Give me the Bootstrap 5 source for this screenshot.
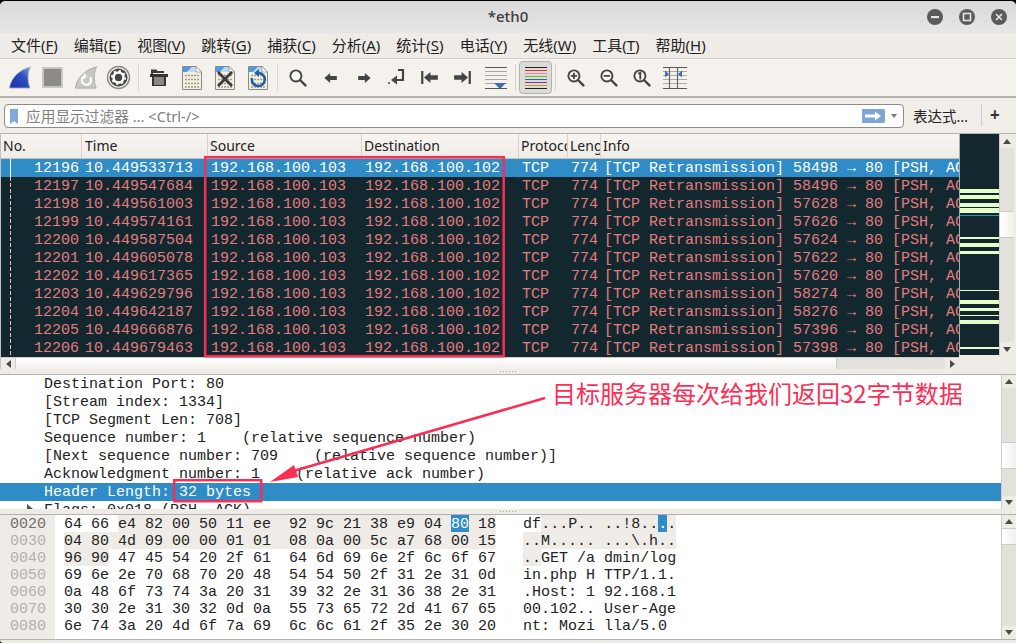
<!DOCTYPE html>
<html lang="zh">
<head>
<meta charset="utf-8">
<title>*eth0</title>
<link href="https://cdn.jsdelivr.net/npm/bootstrap@5.3.0/dist/css/bootstrap.min.css" rel="stylesheet">
<style>
html,body{height:643px;overflow:hidden;background:#000;margin:0}
body{font-family:"Noto Sans","Noto Sans CJK SC",sans-serif;color:#222}
.win{position:relative;width:1016px;height:643px;background:#efece8;border-radius:6px 6px 0 3px;overflow:hidden;border-top:1px solid #000}
.titlebar{height:32px;background:linear-gradient(#d9d9d9,#e6e6e6);position:relative}
.ttl{font-size:15px;font-weight:500;color:#3d3d3d;line-height:31px;font-family:"Noto Sans",sans-serif}
.wbtns{position:absolute;right:9px;top:8px;gap:16px}
.wb{width:16px;height:16px;border-radius:50%;background:#5b5b5b;display:block}
.menubar{height:26px;background:#efece8;border-bottom:1px solid #d3d0cb}
.menubar ul{margin-left:3px}
.menubar .nav-link{font-size:15px;line-height:25px;padding:0 8.5px;color:#222;white-space:nowrap}
.menubar u{text-underline-offset:2px}
.toolbar{height:39px;background:#f5f2ed;border-bottom:2px solid #b4b2ae;padding-left:3px}
.tb{width:33px;height:33px;padding:0;border:1px solid transparent;border-radius:4px;display:flex;align-items:center;justify-content:center}
.tb.on{background:#dddbd7;border-color:#b4b2ae}
.tsep{width:1px;height:27px;background:#d8d5d0;margin:0 3px}
.filterbar{height:35px;padding:6px 0 0 4px;background:#f1eeea}
.fbox{width:900px;height:24px;background:#fff;border:1px solid #8e8c88;border-radius:4px;flex:none}
.fmark{width:18px;border-right:1px solid #8e8c88;flex:none}
.fbox .form-control{border:0;padding:0 0 0 4px;height:22px;min-height:0;font-size:14.7px;line-height:22px;border-radius:0;box-shadow:none}
.fbox .form-control::placeholder{color:#7f7f7f;opacity:1}
.expr{font-size:14.5px;margin-left:9px;width:68px;color:#222;line-height:24px}
.vs{width:1px;height:22px;background:#cfccc7}
.plus{font-size:17px;font-weight:700;line-height:22px;color:#333;margin-left:8px}
.plist{height:236px;border-top:1px solid #b4b2ae;border-left:1px solid #c4c2be;background:#efece8}
.pmain{width:1000px;height:223px}
.pgrid{display:grid;grid-template-columns:81px 126px 154px 157px 49px 33px 358px;width:958px}
.phead{height:25px;background:linear-gradient(#f8f5f1,#efece8);border-bottom:1px solid #c4c2be}
.phead>div{font-size:14px;line-height:24px;padding-left:2px;border-right:1px solid #d6d3ce;overflow:hidden;white-space:nowrap;color:#222}
.mono{font-family:"Liberation Mono",monospace;font-size:15px}
.prow{height:18px;background:#12272e;color:#e27d7f}
.prow>div{line-height:20px;height:18px;padding-left:3px;overflow:hidden;white-space:nowrap}
.prow>div.rgt{text-align:right;padding:0 3px 0 0;background:linear-gradient(#fff,#fff) 9px 0/1px 100% no-repeat}
.prow.dash>div.rgt{background:repeating-linear-gradient(#e9b9b9 0 4px,transparent 4px 6px) 9px 0/1px 100% no-repeat}
.prow.sel{background:#308cc6;color:#fff}
.mini{width:40px;height:221px;background:#12272e;display:block;border-left:1px solid #9fb0b3;flex:none}
.vbar{width:15px;background:#e3e1dc;flex:none;border-left:1px solid #d0cdc8}
.sbtn{background:#efece8;height:13px;flex:none;display:flex;align-items:center;justify-content:center}
.thumb{background:linear-gradient(90deg,#fff,#f2f0ec);flex:none;border-top:1px solid #cfccc7;border-bottom:1px solid #cfccc7}
.tup,.tdn,.tlf,.trt{width:0;height:0;border-style:solid;display:block}
.tup{border-width:0 4.5px 5px;border-color:transparent transparent #4b4b4b}
.tdn{border-width:5px 4.5px 0;border-color:#4b4b4b transparent transparent}
.tlf{border-width:4.5px 5px 4.5px 0;border-color:transparent #4b4b4b transparent transparent}
.trt{border-width:4.5px 0 4.5px 5px;border-color:transparent transparent transparent #4b4b4b}
.hbar{height:13px;width:958px;background:#e3e1dc;border-top:1px solid #d0cdc8}
.hbtn{width:14px;flex:none;background:#efece8;display:flex;align-items:center;justify-content:center}
.hthumb{width:822px;flex:none;background:linear-gradient(#fff,#f2f0ec);border:1px solid #cfccc7;border-width:0 1px}
.split{height:5px;flex:none;position:relative}
.grip{display:block;width:16px;height:1px;margin:2px auto 0;background:repeating-linear-gradient(90deg,#a8a6a2 0 1px,transparent 1px 3px)}
.dpane{height:135px;border-top:1px solid #b4b2ae;background:#fff;flex:none;width:1016px}
.dbody{width:1001px;overflow:hidden;height:134px}
.drow{height:18px;line-height:20px;padding-left:44px;white-space:pre;color:#222}
.drow.sel{background:#308cc6;color:#fff}
.caret-r{position:absolute;left:27px;top:3px;width:0;height:0;border-style:solid;border-width:5px 0 5px 6px;border-color:transparent transparent transparent #555}
.drow.rel{position:relative}
.hpane{height:126px;border-top:1px solid #b4b2ae;border-bottom:1px solid #b4b2ae;background:#fff;flex:none}
.hoff{width:55px;background:#efece8;flex:none;padding-left:10px;color:#b2b0ac;flex:none}
.hoff b{font-weight:400;color:#6f6d6a}
.hex{width:946px;padding-left:9px;color:#222;flex:none}
.hx{height:17px;line-height:19px;white-space:pre}
.gr{padding-top:1px;background:linear-gradient(#efece8,#efece8) 0 0/100% 17px no-repeat}
.sb{padding-top:1px;background:linear-gradient(#308cc6,#308cc6) 0 0/100% 17px no-repeat;color:#fff}
.overlay{position:absolute;left:0;top:-1px;width:1016px;height:643px;pointer-events:none}
.note{position:absolute;left:552px;top:376px;font-family:"Noto Sans CJK SC",sans-serif;font-size:24px;line-height:32px;color:#ff2d55;white-space:nowrap}
</style>
</head>
<body>
<svg width="0" height="0" class="d-block" style="position:absolute">
<defs>
<linearGradient id="fin" x1="0" y1="1" x2="1" y2="0"><stop offset="0" stop-color="#1c2fa6"/><stop offset=".6" stop-color="#2a50c0"/><stop offset="1" stop-color="#7da6e6"/></linearGradient>
<symbol id="doc" viewBox="0 0 22 26">
<path d="M1.5 1.5H15L20.5 7V24.5H1.5Z" fill="#f2f0df" stroke="#8b8b85"/>
<path d="M2 2H11L6 7H2Z" fill="#4e9be0"/><path d="M11 2H15V7H7Z" fill="#bcd9f2"/>
<path d="M15 1.5V7H20.5Z" fill="#fff" stroke="#8b8b85" stroke-width=".7"/>
<g fill="none" stroke="#9c9b8e" stroke-width="1.3" stroke-dasharray="2 1"><path d="M4 10.5H18M4 14.5H18M4 18.5H18M4 22H18"/></g>
</symbol>
<symbol id="mag" viewBox="0 0 24 24">
<circle cx="10" cy="10" r="7" fill="#fff" fill-opacity=".4" stroke="#444" stroke-width="2.4"/>
<path d="M15.5 15.5L22 22" stroke="#444" stroke-width="3" stroke-linecap="round"/>
</symbol>
</defs>
</svg>
<div class="win d-flex flex-column">
  <div class="titlebar text-center flex-none">
    <span class="ttl">*eth0</span>
    <div class="wbtns d-flex">
      <svg class="wb" viewBox="0 0 16 16"><rect x="4" y="7" width="8" height="2.2" fill="#e6e6e6"/></svg>
      <svg class="wb" viewBox="0 0 16 16"><rect x="4.5" y="4.5" width="7" height="7" fill="none" stroke="#e6e6e6" stroke-width="1.6"/></svg>
      <svg class="wb" viewBox="0 0 16 16"><path d="M5 5L11 11M11 5L5 11" stroke="#e6e6e6" stroke-width="1.6"/></svg>
    </div>
  </div>
  <nav class="menubar navbar navbar-expand p-0 d-block flex-none">
    <ul class="navbar-nav ps-0">
      <li class="nav-item"><a class="nav-link" href="#">文件(<u>F</u>)</a></li>
      <li class="nav-item"><a class="nav-link" href="#">编辑(<u>E</u>)</a></li>
      <li class="nav-item"><a class="nav-link" href="#">视图(<u>V</u>)</a></li>
      <li class="nav-item"><a class="nav-link" href="#">跳转(<u>G</u>)</a></li>
      <li class="nav-item"><a class="nav-link" href="#">捕获(<u>C</u>)</a></li>
      <li class="nav-item"><a class="nav-link" href="#">分析(<u>A</u>)</a></li>
      <li class="nav-item"><a class="nav-link" href="#">统计(<u>S</u>)</a></li>
      <li class="nav-item"><a class="nav-link" href="#">电话(<u>Y</u>)</a></li>
      <li class="nav-item"><a class="nav-link" href="#">无线(<u>W</u>)</a></li>
      <li class="nav-item"><a class="nav-link" href="#">工具(<u>T</u>)</a></li>
      <li class="nav-item"><a class="nav-link" href="#">帮助(<u>H</u>)</a></li>
    </ul>
  </nav>
  <div class="toolbar d-flex align-items-center flex-none">
    <div class="tb"><svg width="24" height="25" viewBox="0 0 26 26"><path d="M1.5 24.5C3 13 13 4 24.5 1.5C21 8 21 17 24 24.5Z" fill="url(#fin)" stroke="#b9b8c4"/></svg></div>
    <div class="tb"><svg width="21" height="21" viewBox="0 0 22 22"><rect x="1" y="1" width="20" height="20" fill="#8d8b87" stroke="#cbc9c5" stroke-width="2"/></svg></div>
    <div class="tb"><svg width="24" height="25" viewBox="0 0 26 26"><path d="M1.5 24.5C3 13 13 4 24.5 1.5C21 8 21 17 24 24.5Z" fill="#c9c7c3" stroke="#a9a7a3"/><path d="M17.5 13A5 5 0 1 1 11 11.5" fill="none" stroke="#fff" stroke-width="2.4"/><path d="M10 8V16L14 12Z" fill="#fff" transform="rotate(20 12 12)"/></svg></div>
    <div class="tb"><svg width="25" height="25" viewBox="0 0 25 25"><circle cx="12.5" cy="12.5" r="11" fill="#f1efeb" stroke="#8e8c88" stroke-width="1.4"/><circle cx="12.5" cy="12.5" r="9" fill="#444"/><circle cx="12.5" cy="12.5" r="5" fill="none" stroke="#fff" stroke-width="2.6"/><circle cx="12.5" cy="12.5" r="6.6" fill="none" stroke="#fff" stroke-width="1.8" stroke-dasharray="2.2 3"/></svg></div>
    <span class="tsep"></span>
    <div class="tb"><svg width="20" height="20" viewBox="0 0 20 20"><path d="M2 4V1.5H8V3H15V5H4V7H2Z" fill="#3a3a3a"/><path d="M1 6H19V9H17V18H3V9H1Z" fill="#333"/><rect x="5" y="9" width="10" height="8" fill="#8a8885"/></svg></div>
    <div class="tb"><svg width="22" height="26"><use href="#doc"/></svg></div>
    <div class="tb"><svg width="22" height="26" viewBox="0 0 22 26"><use href="#doc" width="22" height="26"/><path d="M4 7L18 21M18 7L4 21" stroke="#3b3b3b" stroke-width="2.8"/></svg></div>
    <div class="tb"><svg width="22" height="26" viewBox="0 0 22 26"><use href="#doc" width="22" height="26"/><path d="M11 8A6.5 6.5 0 1 1 5 13" fill="none" stroke="#1f5fa8" stroke-width="2.6"/><path d="M12 4V12L7 8Z" fill="#1f5fa8"/></svg></div>
    <span class="tsep"></span>
    <div class="tb"><svg width="19" height="19"><use href="#mag" width="19" height="19"/></svg></div>
    <div class="tb"><svg width="14" height="10" viewBox="0 0 16 12"><path d="M0 6L7 0V3.5H15V8.5H7V12Z" fill="#444"/></svg></div>
    <div class="tb"><svg width="14" height="10" viewBox="0 0 16 12"><path d="M16 6L9 0V3.5H1V8.5H9V12Z" fill="#444"/></svg></div>
    <div class="tb"><svg width="18" height="18" viewBox="0 0 18 18"><path d="M10 1H15V11H8" fill="none" stroke="#444" stroke-width="2.2"/><path d="M3 11L9 6.5V15.5Z" fill="#444"/><circle cx="1" cy="14" r="1" fill="#444"/></svg></div>
    <div class="tb"><svg width="17" height="13" viewBox="0 0 18 14"><rect x="0" y="0" width="2.4" height="14" fill="#444"/><path d="M3 7L10 1V4.5H18V9.5H10V13Z" fill="#444"/></svg></div>
    <div class="tb"><svg width="17" height="13" viewBox="0 0 18 14"><rect x="15.6" y="0" width="2.4" height="14" fill="#444"/><path d="M15 7L8 1V4.5H0V9.5H8V13Z" fill="#444"/></svg></div>
    <div class="tb"><svg width="24" height="24" viewBox="0 0 24 24"><g stroke="#a9aaa3" stroke-width="1"><path d="M1 5.5H23M1 9.5H23M1 13.5H23M1 17.5H23"/></g><path d="M1 1.5H23M1 22.5H23" stroke="#555" stroke-width="1.2"/><path d="M10 17H22L16 23Z" fill="#3a6fb5"/></svg></div>
    <span class="tsep"></span>
    <div class="tb on"><svg width="24" height="24" viewBox="0 0 24 24" fill="none" stroke-width="1"><path d="M1 1.5H23" stroke="#222"/><path d="M1 4.5H23" stroke="#e0302e"/><path d="M1 7.5H23" stroke="#e58aa8"/><path d="M1 10.5H23" stroke="#6fc300"/><path d="M1 13.5H23" stroke="#3b5cc4"/><path d="M1 16.5H23" stroke="#7a3a9c"/><path d="M1 19.5H23" stroke="#c19a1c"/><path d="M1 22.5H23" stroke="#222"/></svg></div>
    <span class="tsep"></span>
    <div class="tb"><svg width="19" height="19" viewBox="0 0 24 24"><use href="#mag" width="24" height="24"/><path d="M6 10H14M10 6V14" stroke="#444" stroke-width="2.4"/></svg></div>
    <div class="tb"><svg width="19" height="19" viewBox="0 0 24 24"><use href="#mag" width="24" height="24"/><path d="M6 10H14" stroke="#444" stroke-width="2.4"/></svg></div>
    <div class="tb"><svg width="19" height="19" viewBox="0 0 24 24"><use href="#mag" width="24" height="24"/><path d="M8 7.5L10.5 6V14.5" fill="none" stroke="#444" stroke-width="2.4"/></svg></div>
    <div class="tb"><svg width="24" height="24" viewBox="0 0 24 24"><g stroke="#a9aaa3" stroke-width="1"><path d="M0 5.5H24M0 9.5H24M0 13.5H24M0 17.5H24"/></g><path d="M0 1.5H24M0 22.5H24" stroke="#555" stroke-width="1.2"/><path d="M6.5 1V23M14.5 1V23" stroke="#666" stroke-width="1.2"/><path d="M2 4.5L6 8L2 11.5ZM19 4.5L15 8L19 11.5Z" fill="#3a6fb5"/></svg></div>
  </div>
  <div class="filterbar d-flex flex-none">
    <div class="fbox input-group flex-nowrap align-items-center">
      <div class="fmark d-flex justify-content-center align-items-center h-100"><svg width="8" height="15" viewBox="0 0 8 15"><path d="M0 0H8V15L4 12L0 15Z" fill="#7fa9da"/></svg></div>
      <input class="form-control" type="text" placeholder="应用显示过滤器 ... &lt;Ctrl-/&gt;">
      <svg width="24" height="14" viewBox="0 0 24 14" class="flex-none"><rect width="24" height="14" rx="2" fill="#7ba7d7"/><path d="M4 5.5H14V2.5L20 7L14 11.5V8.5H4Z" fill="#fff"/></svg>
      <span class="d-flex justify-content-center flex-none" style="width:19px"><span class="tdn" style="border-top-color:#777;border-width:4px 3.5px 0"></span></span>
    </div>
    <div class="expr flex-none">表达式…</div>
    <span class="vs flex-none"></span>
    <span class="plus flex-none">+</span>
  </div>
  <div class="plist d-flex flex-column flex-none">
    <div class="d-flex pmain">
      <div class="flex-none" style="width:959px">
        <div class="pgrid phead">
          <div>No.</div><div style="padding-left:3px">Time</div><div>Source</div><div>Destination</div><div>Protocol</div><div>Length</div><div class="border-0">Info</div>
        </div>
        <div class="pgrid prow mono sel"><div class="rgt">12196</div><div>10.449533713</div><div>192.168.100.103</div><div>192.168.100.102</div><div>TCP</div><div>774</div><div>[TCP Retransmission] 58498 → 80 [PSH, ACK] Seq=1 Ack=1</div></div>
        <div class="pgrid prow mono dash"><div class="rgt">12197</div><div>10.449547684</div><div>192.168.100.103</div><div>192.168.100.102</div><div>TCP</div><div>774</div><div>[TCP Retransmission] 58496 → 80 [PSH, ACK] Seq=1 Ack=1</div></div>
        <div class="pgrid prow mono dash"><div class="rgt">12198</div><div>10.449561003</div><div>192.168.100.103</div><div>192.168.100.102</div><div>TCP</div><div>774</div><div>[TCP Retransmission] 57628 → 80 [PSH, ACK] Seq=1 Ack=1</div></div>
        <div class="pgrid prow mono dash"><div class="rgt">12199</div><div>10.449574161</div><div>192.168.100.103</div><div>192.168.100.102</div><div>TCP</div><div>774</div><div>[TCP Retransmission] 57626 → 80 [PSH, ACK] Seq=1 Ack=1</div></div>
        <div class="pgrid prow mono dash"><div class="rgt">12200</div><div>10.449587504</div><div>192.168.100.103</div><div>192.168.100.102</div><div>TCP</div><div>774</div><div>[TCP Retransmission] 57624 → 80 [PSH, ACK] Seq=1 Ack=1</div></div>
        <div class="pgrid prow mono dash"><div class="rgt">12201</div><div>10.449605078</div><div>192.168.100.103</div><div>192.168.100.102</div><div>TCP</div><div>774</div><div>[TCP Retransmission] 57622 → 80 [PSH, ACK] Seq=1 Ack=1</div></div>
        <div class="pgrid prow mono dash"><div class="rgt">12202</div><div>10.449617365</div><div>192.168.100.103</div><div>192.168.100.102</div><div>TCP</div><div>774</div><div>[TCP Retransmission] 57620 → 80 [PSH, ACK] Seq=1 Ack=1</div></div>
        <div class="pgrid prow mono dash"><div class="rgt">12203</div><div>10.449629796</div><div>192.168.100.103</div><div>192.168.100.102</div><div>TCP</div><div>774</div><div>[TCP Retransmission] 58274 → 80 [PSH, ACK] Seq=1 Ack=1</div></div>
        <div class="pgrid prow mono dash"><div class="rgt">12204</div><div>10.449642187</div><div>192.168.100.103</div><div>192.168.100.102</div><div>TCP</div><div>774</div><div>[TCP Retransmission] 58276 → 80 [PSH, ACK] Seq=1 Ack=1</div></div>
        <div class="pgrid prow mono dash"><div class="rgt">12205</div><div>10.449666876</div><div>192.168.100.103</div><div>192.168.100.102</div><div>TCP</div><div>774</div><div>[TCP Retransmission] 57396 → 80 [PSH, ACK] Seq=1 Ack=1</div></div>
        <div class="pgrid prow mono dash"><div class="rgt">12206</div><div>10.449679463</div><div>192.168.100.103</div><div>192.168.100.102</div><div>TCP</div><div>774</div><div>[TCP Retransmission] 57398 → 80 [PSH, ACK] Seq=1 Ack=1</div></div>
      </div>
      <svg class="mini" viewBox="0 0 40 221" preserveAspectRatio="none">
        <g fill="#e4ffc7"><rect y="55" width="40" height="4"/><rect y="61" width="40" height="4"/><rect y="69" width="40" height="4"/><rect y="74" width="40" height="5"/><rect y="103" width="40" height="2"/><rect y="109" width="40" height="4"/><rect y="117" width="40" height="3"/><rect y="156" width="40" height="1"/><rect y="166" width="40" height="4"/><rect y="174" width="40" height="3"/><rect y="181" width="40" height="1"/><rect y="186" width="40" height="4"/><rect y="213" width="40" height="2"/></g>
        <rect y="81" width="40" height="1" fill="#308cc6"/>
      </svg>
      <div class="vbar d-flex flex-column" style="height:222px">
        <div class="sbtn" style="height:14px"><span class="tup"></span></div>
        <div style="height:63px"></div>
        <div class="thumb" style="height:27px"></div>
        <div class="flex-grow-1"></div>
        <div class="sbtn" style="height:14px"><span class="tdn"></span></div>
      </div>
    </div>
    <div class="hbar d-flex">
      <div class="hbtn"><span class="tlf"></span></div>
      <div class="hthumb"></div>
      <div class="flex-grow-1"></div>
      <div class="hbtn"><span class="trt"></span></div>
    </div>
  </div>
  <div class="split"><span class="grip"></span></div>
  <div class="dpane d-flex">
    <div class="dbody mono">
      <div class="drow">Destination Port: 80</div>
      <div class="drow">[Stream index: 1334]</div>
      <div class="drow">[TCP Segment Len: 708]</div>
      <div class="drow">Sequence number: 1    (relative sequence number)</div>
      <div class="drow">[Next sequence number: 709    (relative sequence number)]</div>
      <div class="drow">Acknowledgment number: 1    (relative ack number)</div>
      <div class="drow sel">Header Length: 32 bytes</div>
      <div class="drow rel"><span class="caret-r"></span>Flags: 0x018 (PSH, ACK)</div>
    </div>
    <div class="vbar d-flex flex-column">
      <div class="sbtn"><span class="tup"></span></div>
      <div style="height:54px"></div>
      <div class="thumb" style="height:27px"></div>
      <div class="flex-grow-1"></div>
      <div class="sbtn"><span class="tdn"></span></div>
    </div>
  </div>
  <div class="split"><span class="grip"></span></div>
  <div class="hpane d-flex mono">
    <div class="hoff">
      <div class="hx"><b>0020</b></div>
      <div class="hx">0030</div>
      <div class="hx">0040</div>
      <div class="hx">0050</div>
      <div class="hx">0060</div>
      <div class="hx">0070</div>
      <div class="hx">0080</div>
    </div>
    <div class="hex">
      <div class="hx">64 66 <span class="gr">e4 82 00 50 11 ee  92 9c 21 38 e9 04 </span><span class="sb">80</span><span class="gr"> 18</span>   df<span class="gr">...P.. ..!8..</span><span class="sb">.</span><span class="gr">.</span></div>
      <div class="hx"><span class="gr">04 80 4d 09 00 00 01 01  08 0a 00 5c a7 68 00 15</span>   <span class="gr">..M..... ...\.h..</span></div>
      <div class="hx"><span class="gr">96 90</span> 47 45 54 20 2f 61  64 6d 69 6e 2f 6c 6f 67   <span class="gr">..</span>GET /a dmin/log</div>
      <div class="hx">69 6e 2e 70 68 70 20 48  54 54 50 2f 31 2e 31 0d   in.php H TTP/1.1.</div>
      <div class="hx">0a 48 6f 73 74 3a 20 31  39 32 2e 31 36 38 2e 31   .Host: 1 92.168.1</div>
      <div class="hx">30 30 2e 31 30 32 0d 0a  55 73 65 72 2d 41 67 65   00.102.. User-Age</div>
      <div class="hx">6e 74 3a 20 4d 6f 7a 69  6c 6c 61 2f 35 2e 30 20   nt: Mozi lla/5.0</div>
    </div>
    <div class="vbar d-flex flex-column">
      <div class="sbtn"><span class="tup"></span></div>
      <div class="thumb" style="height:17px"></div>
      <div class="flex-grow-1"></div>
      <div class="sbtn"><span class="tdn"></span></div>
    </div>
  </div>
  <svg class="overlay" viewBox="0 0 1016 643">
    <g fill="none" stroke="#fb2d55" stroke-width="2.5">
      <rect x="205.2" y="157.2" width="298.5" height="199"/>
      <rect x="174.2" y="480.2" width="87" height="21"/>
    </g>
    <path d="M545 398L290 472" stroke="#fb2d55" stroke-width="2.5"/>
    <path d="M270 482L294 465L298 477Z" fill="#fb2d55"/>
  </svg>
  <div class="note">目标服务器每次给我们返回32字节数据</div>
</div>
<script src="https://cdn.jsdelivr.net/npm/bootstrap@5.3.0/dist/js/bootstrap.bundle.min.js"></script>
</body>
</html>
